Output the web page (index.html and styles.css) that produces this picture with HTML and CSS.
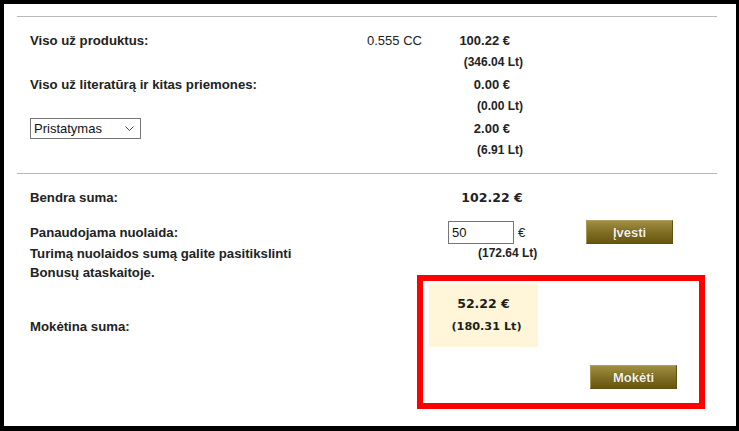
FILE: index.html
```html
<!DOCTYPE html>
<html lang="lt">
<head>
<meta charset="utf-8">
<title>Krepšelis</title>
<link rel="stylesheet" href="styles.css">
</head>
<body>
<div class="page">
  <div class="rule"></div>
  <section class="totals">
    <div class="lbl">Viso už produktus:</div>
    <div class="cc">0.555 CC</div>
    <div class="eur">100.22 €</div>

    <div></div><div></div>
    <div class="lt">(346.04 Lt)</div>

    <div class="lbl">Viso už literatūrą ir kitas priemones:</div>
    <div></div>
    <div class="eur">0.00 €</div>

    <div></div><div></div>
    <div class="lt">(0.00 Lt)</div>

    <div class="sel-wrap">
      <select class="sel"><option>Pristatymas</option></select>
      <svg class="chev" width="9" height="5" viewBox="0 0 9 5"><path d="M0.5 0.5 L4.5 4.5 L8.5 0.5" fill="none" stroke="#444" stroke-width="1"/></svg>
    </div>
    <div></div>
    <div class="eur">2.00 €</div>

    <div></div><div></div>
    <div class="lt">(6.91 Lt)</div>
  </section>
  <div class="rule"></div>
  <section class="pay">
    <div class="lbl row-a">Bendra suma:</div>
    <div class="big row-a">102.22 €</div>

    <div class="lbl row-b">Panaudojama nuolaida:</div>
    <div class="disc row-b"><input class="num" type="text" value="50"><span>€</span></div>
    <div class="row-b btn-cell"><button class="btn">Įvesti</button></div>

    <div class="lbl row-c">Turimą nuolaidos sumą galite pasitikslinti</div>
    <div class="lt disc-lt row-c">(172.64 Lt)</div>

    <div class="lbl row-d">Bonusų ataskaitoje.</div>

    <div class="lbl row-e final-lbl">Mokėtina suma:</div>
    <div class="final row-e">
      <div class="final-eur">52.22 €</div>
      <div class="final-lt">(180.31 Lt)</div>
    </div>

    <div class="row-f btn-cell pay-cell"><button class="btn">Mokėti</button></div>
  </section>
  <div class="highlight"></div>
</div>
</body>
</html>
```
FILE: styles.css
```css
html, body {
  margin: 0;
  padding: 0;
  background: #000;
}
body {
  font-family: "Liberation Sans", Arial, sans-serif;
  color: #222;
  font-size: 13px;
}
.page {
  position: relative;
  box-sizing: border-box;
  margin: 4px 3px 5px 4px;
  height: 422px;
  background: #fff;
  padding: 12px 19px 0 13px;
}
.rule {
  height: 1px;
  background: #b9b9b9;
}
.totals {
  display: grid;
  grid-template-columns: 337px 73px 83px;
  grid-auto-rows: 22px;
  align-items: center;
  padding: 12px 0 12px 13px;
}
.lbl {
  font-weight: bold;
  font-size: 13.2px;
  white-space: nowrap;
}
.cc {
  font-size: 13px;
}
.eur {
  font-weight: bold;
  text-align: right;
  padding-right: 13px;
}
.lt {
  font-weight: bold;
  font-size: 12px;
  text-align: right;
}
.sel-wrap {
  position: relative;
  width: 111px;
  height: 21px;
}
.sel {
  appearance: none;
  -webkit-appearance: none;
  box-sizing: border-box;
  width: 111px;
  height: 21px;
  margin: 0;
  border: 1px solid #767676;
  border-radius: 0;
  background: #fff;
  color: #111;
  font-family: "Liberation Sans", Arial, sans-serif;
  font-size: 13px;
  padding: 0 0 0 3px;
}
.chev {
  position: absolute;
  right: 7px;
  top: 8px;
  pointer-events: none;
}
.pay {
  display: grid;
  grid-template-columns: 399px 109px 48px 91px;
  grid-template-rows: 35px 22px 20px 18px auto auto;
  padding: 12px 0 0 13px;
}
.row-a { grid-row: 1; align-self: start; line-height: 24px; }
.row-b { grid-row: 2; align-self: center; }
.row-c { grid-row: 3; align-self: center; }
.row-d { grid-row: 4; align-self: center; }
.row-e { grid-row: 5; }
.row-f { grid-row: 6; }
.lbl.row-a, .lbl.row-b, .lbl.row-c, .lbl.row-d, .lbl.row-e { grid-column: 1; }
.big {
  grid-column: 2;
  text-align: center;
  padding-left: 17px;
  font-family: "DejaVu Sans", Verdana, sans-serif;
  font-weight: bold;
  font-size: 12.5px;
}
.disc {
  grid-column: 2 / 4;
  display: flex;
  align-items: center;
  gap: 4px;
  padding-left: 19px;
  height: 22px;
}
.num {
  box-sizing: border-box;
  width: 66px;
  height: 23px;
  margin: 0;
  border: 1px solid #767676;
  padding: 0 3px;
  font-family: "Liberation Sans", Arial, sans-serif;
  font-size: 13px;
  color: #111;
  outline: none;
}
.disc span {
  font-size: 13px;
}
.btn-cell {
  grid-column: 4;
  display: flex;
}
.btn {
  flex-shrink: 0;
  box-sizing: border-box;
  width: 87px;
  height: 24px;
  margin: 0;
  padding: 0;
  border: 1px solid #5e5016;
  border-top-color: #b0a060;
  border-left-color: #a89654;
  background: linear-gradient(#a08e42, #7e6c22 55%, #67560e);
  color: #f4f2ea;
  font-family: "Liberation Sans", Arial, sans-serif;
  font-weight: bold;
  font-size: 13px;
  text-shadow: 0 0 1px #3a3000;
}
.disc-lt {
  grid-column: 2 / 4;
  text-align: left;
  padding-left: 49px;
  font-weight: bold;
}
.final-lbl {
  align-self: end;
  margin-bottom: 11px;
  line-height: 18px;
}
.final {
  grid-column: 2;
  margin-top: 3px;
  height: 63px;
  box-sizing: border-box;
  padding: 10px 0;
  background: #fff6d9;
  display: flex;
  flex-direction: column;
  gap: 3px;
  align-items: center;
  font-family: "DejaVu Sans", Verdana, sans-serif;
  font-weight: bold;
  color: #1e1e1e;
}
.final-eur {
  font-size: 12.5px;
  line-height: 20px;
}
.final-lt {
  font-size: 11.25px;
  line-height: 20px;
  padding-left: 6px;
}
.pay-cell {
  margin-top: 18px;
  padding-left: 4px;
}
.highlight {
  position: absolute;
  left: 413px;
  top: 271px;
  width: 288px;
  height: 134px;
  box-sizing: border-box;
  border: 6px solid #ff0000;
  pointer-events: none;
}
```
